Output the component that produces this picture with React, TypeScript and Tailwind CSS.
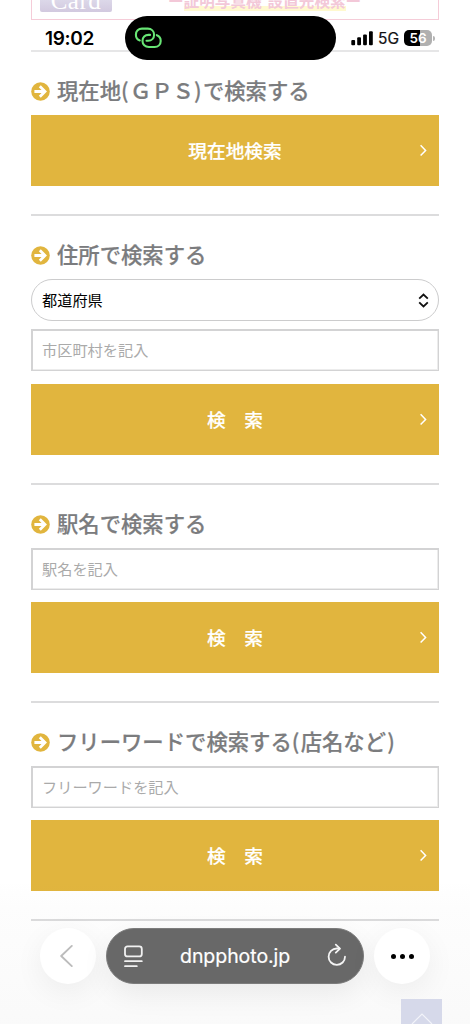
import React from "react";

function ArrowBadge() {
  return (
    <svg className="mt-[1px] size-[19px] shrink-0" viewBox="0 0 19 19" fill="none">
      <circle cx="9.5" cy="9.5" r="9.3" fill="#e1b53e" />
      <path d="M3.4 9.5H14M8.8 4.3l5.2 5.2-5.2 5.2" stroke="#fff" strokeWidth="2.8" />
    </svg>
  );
}

function Heading({ children }: { children: React.ReactNode }) {
  return (
    <div className="flex h-[63px] items-center gap-[7px] pt-[15px]">
      <ArrowBadge />
      <h2 className="-mt-[3px] whitespace-nowrap text-[21.35px] font-medium leading-[30px] text-[#7b7c7e] [-webkit-text-stroke:0.2px_#7b7c7e]">
        {children}
      </h2>
    </div>
  );
}

function SearchButton({ children }: { children: React.ReactNode }) {
  return (
    <button className="relative flex h-[71px] w-full items-center justify-center bg-[#e1b53e] text-[18.7px] font-medium text-white [-webkit-text-stroke:0.2px_#fff]">
      <span className="whitespace-pre">{children}</span>
      <svg className="absolute right-[11px] top-[29px] h-[13px] w-[9px]" viewBox="0 0 9 13" fill="none">
        <path d="M1.6 1.2l5 5.2-5 5.2" stroke="#fff" strokeWidth="1.5" />
      </svg>
    </button>
  );
}

function Field({ label }: { label: string }) {
  return (
    <input
      type="text"
      placeholder={label}
      className="block h-[42px] w-full border-2 border-b-[1px] border-r-[1px] border-[#d3d3d4] bg-white pb-[3px] pl-[9px] pr-[9px] text-[15.2px] text-black shadow-[inset_-1px_-1px_0_#ececec] outline-none placeholder:text-[#aaaaaa]"
    />
  );
}

function Rule() {
  return <div className="mt-7 h-[2px] bg-[#dcdcdd]" />;
}

function StatusBar() {
  return (
    <div className="absolute left-0 top-0 h-[60px] w-full">
      <span className="absolute left-[45px] top-[27px] font-[Inter] text-[19px] font-semibold leading-6 tracking-[-0.3px] text-black">
        19:02
      </span>
      <div className="absolute left-[125px] top-4 h-[43.5px] w-[211px] rounded-full bg-black">
        <svg className="absolute left-[9px] top-[10px] h-[24px] w-[29px]" viewBox="0 0 29 24" fill="none" stroke="#68e575" strokeWidth="2.1" strokeLinecap="round">
          <path d="M5.8 14.4C3.1 13.5 1.9 11 1.9 8.7 1.9 5.1 4.5 2.6 8 2.6h5.8c3.7 0 6.3 2.7 6.3 6.1 0 3.5-2.5 6-6 6h-1.6" />
          <path d="M22.8 9.2c2.7.9 3.9 3.4 3.9 5.7 0 3.6-2.6 6.1-6.1 6.1h-5.8c-3.7 0-6.3-2.7-6.3-6.1 0-3.5 2.5-6 6-6h1.600" />
        </svg>
      </div>
      <svg className="absolute left-[351px] top-[30px] h-[16px] w-[23px]" viewBox="0 0 23 16" fill="#000">
        <rect x="0.3" y="10" width="3.8" height="5.2" rx="1" />
        <rect x="6.2" y="7.3" width="3.8" height="7.9" rx="1" />
        <rect x="12.1" y="4.5" width="3.8" height="10.7" rx="1" />
        <rect x="18" y="1.3" width="3.8" height="13.9" rx="1" />
      </svg>
      <span className="absolute left-[378px] top-[28px] font-[Inter] text-[15.5px] font-normal leading-[22px] text-[#111] [-webkit-text-stroke:0.2px_#111]">5G</span>
      <div className="absolute left-[404px] top-[30px] flex h-[16px] w-[28px] items-center justify-center rounded-[5px] bg-[linear-gradient(90deg,#000_57%,#b0b0b0_57%)] font-[Inter] text-[13.5px] font-semibold text-white">
        56
      </div>
      <div className="absolute left-[433px] top-[36px] h-[5px] w-[1.5px] rounded-r-full bg-[#b5b5b5]" />
    </div>
  );
}

function BrowserBar() {
  return (
    <div className="absolute bottom-0 left-0 h-[144px] w-full bg-[linear-gradient(to_bottom,transparent,rgba(120,120,120,0.015)_20%,rgba(120,120,120,0.04))]">
      <div className="absolute left-[40px] top-[48px] flex size-14 items-center justify-center rounded-full bg-white shadow-[0_8px_30px_rgba(0,0,0,0.06)]">
        <svg className="h-[24px] w-[14px] -translate-x-[2px]" viewBox="0 0 14 24" fill="none" stroke="#bcbcbc" strokeWidth="1.9" strokeLinecap="round" strokeLinejoin="round">
          <path d="M12.8 1.9L2.2 12l10.6 10.1" />
        </svg>
      </div>
      <div className="absolute left-[106px] top-[48px] h-[55.5px] w-[258px] rounded-full border border-[#7c7c7c] bg-[#686868] shadow-[0_10px_28px_rgba(0,0,0,0.07)]">
        <svg className="absolute left-[16px] top-[15px] h-[24px] w-[21px]" viewBox="0 0 21 24" fill="none" stroke="#f1f1f1" strokeWidth="1.8" strokeLinecap="round">
          <rect x="2" y="2.4" width="16.8" height="10" rx="2.5" />
          <path d="M2 17.2h16.8M2 22.200h11.8" />
        </svg>
        <span className="absolute left-[73px] top-[14px] font-[Inter] text-[19.5px] leading-[26px] tracking-[-0.05px] text-white [-webkit-text-stroke:0.2px_#fff]">
          dnpphoto.jp
        </span>
        <svg className="absolute left-[220px] top-[14px] h-[24px] w-[20px]" viewBox="0 0 20 24" fill="none" stroke="#f4f4f4" strokeWidth="1.8" strokeLinecap="round" strokeLinejoin="round">
          <path d="M18 13.700a8.2 8.2 0 1 1-8.2-8.2h2.5" />
          <path d="M8.8 1.7l4.2 3.900-4.2 4" />
        </svg>
      </div>
      <div className="absolute left-[374px] top-[48px] flex size-14 items-center justify-center gap-[4px] rounded-full bg-white shadow-[0_8px_30px_rgba(0,0,0,0.06)]">
        <i className="size-[5px] rounded-full bg-black" />
        <i className="size-[5px] rounded-full bg-black" />
        <i className="size-[5px] rounded-full bg-black" />
      </div>
    </div>
  );
}

export default function App() {
  return (
    <div lang="ja" className="relative h-[1024px] w-[470px] overflow-hidden bg-white font-['Noto_Sans_CJK_JP',sans-serif]">
      <main className="px-[31px]">
        <div className="flex h-[20px] items-start overflow-hidden border-x border-b border-[#f5ccd8]">
          <div className="ml-[8px] flex h-[12px] w-[72px] items-end justify-center rounded-b-[2px] bg-linear-to-b from-[#dcd8e9] to-[#d2c9df]">
            <span className="font-['Liberation_Serif',serif] text-[25px] leading-[23px] tracking-[0.5px] text-white">Card</span>
          </div>
          <div className="ml-[56px] mt-[-11px] flex whitespace-nowrap text-[15.6px] font-bold leading-[22px] text-[#f3c8d8]">
            <span>ー</span>
            <span className="bg-[linear-gradient(transparent_78%,#fff9cf_78%)]">
              証明写真機<span className="inline-block w-[6px]" />設置先検索
            </span>
            <span>ー</span>
          </div>
        </div>
        <div className="mt-[30px] h-[2px] bg-[#e6e6e7]" />
        <section>
          <Heading>
            現在地<span className="tracking-[1.3px]">(</span>ＧＰＳ<span className="tracking-[1.3px]">)</span>で検索する
          </Heading>
          <SearchButton>現在地検索</SearchButton>
          <Rule />
        </section>
        <section>
          <Heading>住所で検索する</Heading>
          <button className="flex h-[42px] w-full items-center justify-between rounded-full border border-[#cccccd] bg-white pl-[10px] pr-[9px] text-[15.2px] text-black">
            <span className="-mt-[2px]">都道府県</span>
            <svg className="h-[15px] w-[11px]" viewBox="0 0 11 15" fill="none" stroke="#111" strokeWidth="1.8">
              <path d="M1.2 5.7l4.3-4.2 4.3 4.2M1.2 9.3l4.3 4.2 4.3-4.2" />
            </svg>
          </button>
          <div className="mt-2"><Field label="市区町村を記入" /></div>
          <div className="mt-[13px]"><SearchButton>検　索</SearchButton></div>
          <Rule />
        </section>
        <section>
          <Heading>駅名で検索する</Heading>
          <Field label="駅名を記入" />
          <div className="mt-[12px]"><SearchButton>検　索</SearchButton></div>
          <Rule />
        </section>
        <section>
          <Heading>
            フリーワードで検索する<span className="tracking-[1.3px]">(</span>店名など<span className="ml-[1.3px]">)</span>
          </Heading>
          <Field label="フリーワードを記入" />
          <div className="mt-[12px]"><SearchButton>検　索</SearchButton></div>
          <Rule />
        </section>
      </main>
      <StatusBar />
      <BrowserBar />
      <div className="absolute bottom-0 left-[401px] flex h-[25px] w-[41px] justify-center bg-[#d6d9ea]">
        <svg className="mt-[14px] h-[11px] w-[22px]" viewBox="0 0 22 11" fill="none" stroke="#f2f3f9" strokeWidth="1.2">
          <path d="M1 11L11 1l10 10" />
        </svg>
      </div>
    </div>
  );
}
